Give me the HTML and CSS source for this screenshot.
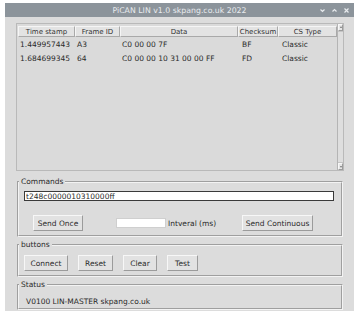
FILE: index.html
```html
<!DOCTYPE html>
<html lang="en">
<head>
<meta charset="utf-8">
<title>PiCAN LIN</title>
<link rel="stylesheet" href="styles.css">
</head>
<body>
<div class="window">
	<div class="titlebar">
		<span class="title">PiCAN LIN v1.0 skpang.co.uk 2022</span>
		<div class="winctl">
			<svg width="7" height="7" viewBox="0 0 7 7"><path d="M1.5 2.5 L3.5 4.5 L5.5 2.5" fill="none" stroke="currentColor" stroke-width="1.2"/></svg>
			<svg width="7" height="7" viewBox="0 0 7 7"><path d="M1.5 4.5 L3.5 2.5 L5.5 4.5" fill="none" stroke="currentColor" stroke-width="1.2"/></svg>
			<svg width="7" height="7" viewBox="0 0 7 7"><path d="M1.5 1.5 L5.5 5.5 M5.5 1.5 L1.5 5.5" fill="none" stroke="currentColor" stroke-width="1.2"/></svg>
		</div>
	</div>
	<div class="content">
		<div class="listbox">
			<div class="table">
				<div class="row head">
					<span>Time stamp</span><span>Frame ID</span><span>Data</span><span>Checksum</span><span>CS Type</span>
				</div>
				<div class="row">
					<span>1.449957443</span><span>A3</span><span>C0 00 00 7F</span><span class="sum">BF</span><span class="sum">Classic</span>
				</div>
				<div class="row">
					<span>1.684699345</span><span>64</span><span>C0 00 00 10 31 00 00 FF</span><span class="sum">FD</span><span class="sum">Classic</span>
				</div>
			</div>
			<div class="scroll">
				<i class="arrow up"></i>
				<div class="thumb"></div>
				<i class="arrow down"></i>
			</div>
		</div>

		<fieldset class="group commands">
			<legend>Commands</legend>
			<input class="cmd" type="text" value="t248c0000010310000ff">
			<div class="cmdrow">
				<button class="btn once">Send Once</button>
				<input class="interval" type="text">
				<span class="ilabel">Intveral (ms)</span>
				<button class="btn cont">Send Continuous</button>
			</div>
		</fieldset>

		<fieldset class="group buttons">
			<legend>buttons</legend>
			<div class="btnrow">
				<button class="btn w-connect">Connect</button>
				<button class="btn w-reset">Reset</button>
				<button class="btn w-clear">Clear</button>
				<button class="btn w-test">Test</button>
			</div>
		</fieldset>

		<fieldset class="group status">
			<legend>Status</legend>
			<div class="statustext">V0100 LIN-MASTER skpang.co.uk</div>
		</fieldset>
	</div>
</div>
</body>
</html>
```
FILE: styles.css
```css
*{box-sizing: border-box;}
body{
	margin: 0;
	background: #fff;
	font-family: 'DejaVu Sans', sans-serif;
	font-size: 7.5px;
	color: #2a2a2a;
}
.window{
	margin: 3px 0 0 5px;
	width: 349px;
	height: 308px;
	background: #dcdcdc;
	display: flex;
	flex-direction: column;
}
.titlebar{
	height: 14px;
	flex: none;
	background: #8c949b;
	color: #e8ebee;
	display: grid;
	grid-template-columns: 1fr auto 1fr;
	align-items: center;
	font-size: 7.8px;
}
.title{ grid-column: 2; }
.winctl{
	justify-self: end;
	display: flex;
	gap: 5px;
	margin-right: 4px;
}
.winctl svg{ display: block; }

.content{
	padding: 6px 10px 0 11px;
	display: flex;
	flex-direction: column;
}

.listbox{
	display: flex;
	height: 148px;
	border: 1px solid #b9b9b9;
	background: #dadada;
}
.table{
	flex: 1;
	padding: 2px 0 0 1px;
}
.row{
	display: grid;
	grid-template-columns: 57px 45px 118px 40px 59px;
	height: 14px;
	align-items: center;
}
.row span{ padding-left: 2px; white-space: nowrap; }
.row span.sum{ padding-left: 4px; }
.row.head{ height: 11px; }
	.row.head span{
		height: 11px;
		line-height: 10px;
		padding: 0;
		font-size: 7px;
		text-align: center;
		color: #333;
		background: #e3e3e3;
		border: 1px solid;
		border-color: #f5f5f5 #a9a9a9 #a9a9a9 #f5f5f5;
		overflow: hidden;
	}

.scroll{
	width: 6px;
	display: flex;
	flex-direction: column;
	background: #d4d4d4;
	border-left: 1px solid #b4b4b4;
}
.thumb{
	flex: 1;
	border-top: 1px solid #c4c4c4;
	border-bottom: 1px solid #c4c4c4;
	background: #dedede;
}
.arrow{
	display: block;
	height: 7px;
	background: #e6e6e6;
	border: 1px solid;
	border-color: #f8f8f8 #9c9c9c #9c9c9c #f8f8f8;
	position: relative;
}
	.arrow::after{
		content: '';
		position: absolute;
		left: 1px;
		border-left: 1px solid transparent;
		border-right: 1px solid transparent;
	}
	.arrow.up::after{ top: 1px; border-bottom: 2px solid #777; }
	.arrow.down::after{ top: 2px; border-top: 2px solid #777; }

.group{
	margin: 3px 1px 0;
	padding: 0;
	border: 2px groove #f3f3f3;
	min-width: 0;
}
.group legend{
	padding: 0 2px;
	line-height: 9px;
	color: #2a2a2a;
}
.commands{ margin-top: 6px; padding-bottom: 4px; }
.cmd{
	display: block;
	margin: 5px 7px 0 5px;
	width: 310px;
	height: 10px;
	padding: 0 1px;
	border: 1px solid #3a3a3a;
	background: #fff;
	font: inherit;
	color: #2a2a2a;
	outline: none;
}
.cmdrow{
	display: flex;
	align-items: center;
	margin-top: 14px;
}
.btn{
	height: 16px;
	padding: 0;
	font: inherit;
	color: #2a2a2a;
	background: #e2e2e2;
	border: 1px solid;
	border-color: #f7f7f7 #9b9b9b #9b9b9b #f7f7f7;
}
.once{ width: 50px; margin-left: 14px; }
.interval{
	width: 50px;
	height: 10px;
	margin-left: 33px;
	padding: 0;
	border: 1px solid #cfcfcf;
	background: #fff;
	outline: none;
}
.ilabel{ margin-left: 2px; }
.cont{ width: 71px; margin-left: auto; margin-right: 28px; }

.buttons{ padding-bottom: 4px; }
.btnrow{
	display: flex;
	gap: 10px;
	margin: 6px 0 0 5px;
}
.w-connect{ width: 44px; }
.w-reset{ width: 35px; }
.w-clear{ width: 34px; }
.w-test{ width: 31px; }

.status{ padding-bottom: 2px; }
.statustext{
	margin: 8px 0 0 7px;
	line-height: 9px;
}
```
